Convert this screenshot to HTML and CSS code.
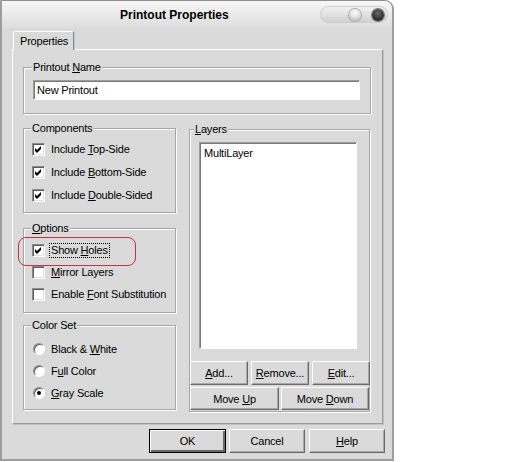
FILE: index.html
```html
<!DOCTYPE html>
<html>
<head>
<meta charset="utf-8">
<title>Printout Properties</title>
<link rel="stylesheet" href="styles.css">
</head>
<body>
<div class="window">
  <div class="titlebar">
    <div class="title">Printout Properties</div>
    <div class="controls"><span class="dot light"></span><span class="dot dark"></span></div>
  </div>
  <div class="tabs"><div class="tab">Properties</div></div>
  <div class="panel">
    <fieldset class="group name-group">
      <legend>Printout <u>N</u>ame</legend>
      <div class="textbox">New Printout</div>
    </fieldset>
    <div class="columns">
      <div class="left">
        <fieldset class="group comp">
          <legend>Components</legend>
          <div class="rows">
            <div class="row r23"><span class="check"><svg width="11" height="11" viewBox="0 0 11 11"><polygon points="2,4 4,6 8,2 8,5 4,9 2,7" fill="#000"/></svg></span><span class="lbl">Include <u>T</u>op-Side</span></div>
            <div class="row r23"><span class="check"><svg width="11" height="11" viewBox="0 0 11 11"><polygon points="2,4 4,6 8,2 8,5 4,9 2,7" fill="#000"/></svg></span><span class="lbl">Include <u>B</u>ottom-Side</span></div>
            <div class="row r23"><span class="check"><svg width="11" height="11" viewBox="0 0 11 11"><polygon points="2,4 4,6 8,2 8,5 4,9 2,7" fill="#000"/></svg></span><span class="lbl">Include <u>D</u>ouble-Sided</span></div>
          </div>
        </fieldset>
        <fieldset class="group options">
          <legend><u>O</u>ptions</legend>
          <div class="rows">
            <div class="row r22 annotated"><span class="annot"></span><span class="check"><svg width="11" height="11" viewBox="0 0 11 11"><polygon points="2,4 4,6 8,2 8,5 4,9 2,7" fill="#000"/></svg></span><span class="lbl focus">Show <u>H</u>oles</span></div>
            <div class="row r22"><span class="check"></span><span class="lbl"><u>M</u>irror Layers</span></div>
            <div class="row r22"><span class="check"></span><span class="lbl">Enable <u>F</u>ont Substitution</span></div>
          </div>
        </fieldset>
        <fieldset class="group colorset">
          <legend>Color Set</legend>
          <div class="rows">
            <div class="row r22"><span class="radio"></span><span class="lbl">Black &amp; <u>W</u>hite</span></div>
            <div class="row r22"><span class="radio"></span><span class="lbl">F<u>u</u>ll Color</span></div>
            <div class="row r22"><span class="radio"><span class="pip"></span></span><span class="lbl"><u>G</u>ray Scale</span></div>
          </div>
        </fieldset>
      </div>
      <fieldset class="group layers">
        <legend><u>L</u>ayers</legend>
        <div class="listbox">MultiLayer</div>
        <div class="btnrow one">
          <div class="btn w58"><span><u>A</u>dd...</span></div>
          <div class="btn w58"><span><u>R</u>emove...</span></div>
          <div class="btn w58"><span><u>E</u>dit...</span></div>
        </div>
        <div class="btnrow two">
          <div class="btn w89 h23"><span>Move <u>U</u>p</span></div>
          <div class="btn w88 h23"><span>Move <u>D</u>own</span></div>
        </div>
      </fieldset>
    </div>
  </div>
  <div class="footer">
    <div class="btn default ok"><span>OK</span></div>
    <div class="btn w76 cancel"><span>Cancel</span></div>
    <div class="btn w76"><span><u>H</u>elp</span></div>
  </div>
</div>
</body>
</html>
```
FILE: styles.css
```css
* { box-sizing: border-box; }
body {
  margin: 0;
  background: #ffffff;
  font-family: "Liberation Sans", Arial, sans-serif;
  font-size: 11px;
  letter-spacing: -0.2px;
  color: #000;
}
u { text-underline-offset: 1px; }

.window {
  width: 394px;
  height: 461px;
  background: #d9dad9;
  border: 1px solid #8f8f8f;
  border-left: 2px solid #9d9d9d;
  border-right: 2px solid #9d9d9d;
  border-bottom: 2px solid #9d9d9d;
  border-radius: 0 9px 0 0;
  display: flex;
  flex-direction: column;
}

.titlebar {
  height: 27px;
  flex: none;
  display: flex;
  align-items: center;
  border-radius: 0 8px 0 0;
  background: linear-gradient(#f7f7f7, #ebebeb 45%, #dcdddc);
}
.title {
  flex: 1;
  margin-left: 118px;
  font-size: 12px;
  font-weight: bold;
  letter-spacing: 0;
}
.controls {
  width: 68px;
  height: 17px;
  margin-right: 4px;
  border-radius: 9px;
  background: linear-gradient(#f4f4f4, #cecece);
  box-shadow: inset 0 0 0 1px #cfcfcf;
  display: flex;
  align-items: center;
  justify-content: flex-end;
  gap: 11px;
  padding-right: 4px;
}
.dot { width: 12px; height: 12px; border-radius: 50%; }
.dot.light {
  background: radial-gradient(circle at 50% 30%, #ffffff, #e2e2e2 45%, #b4b4b4 90%);
  box-shadow: 0 0 0 1px #a9a9a9;
}
.dot.dark {
  background: radial-gradient(circle at 50% 35%, #6a6a6a, #2d2d2d 65%, #151515);
  box-shadow: 0 0 0 1px #7a7a7a;
}

.tabs {
  flex: none;
  margin-top: 3px;
  padding-left: 11px;
  display: flex;
  position: relative;
  z-index: 1;
  margin-bottom: -1px;
}
.tab {
  width: 61px;
  height: 19px;
  padding: 3px 0 0 6px;
  background: #d9dad9;
  border-top: 1px solid #ffffff;
  border-left: 1px solid #ffffff;
  border-right: 1px solid #8a8a8a;
  box-shadow: 1px 0 0 #c4c4c4;
  border-radius: 2px 2px 0 0;
}

.panel {
  flex: none;
  width: 371px;
  height: 375px;
  margin-left: 10px;
  padding: 11px 11px 0 10px;
  border: 1px solid;
  border-color: #ffffff #9a9a9a #9a9a9a #ffffff;
  box-shadow: 1px 1px 0 #c2c2c2;
}

fieldset.group {
  display: block;
  margin: 0;
  padding: 0 8px;
  min-width: 0;
  border: 1px solid #a5a5a5;
  box-shadow: inset 1px 1px 0 #ffffff, 1px 1px 0 #ffffff;
}
fieldset.group legend {
  padding: 0 1px;
  margin-left: -1px;
  line-height: 13px;
  background: #d9dad9;
}

fieldset.name-group { height: 53px; padding-left: 9px; }
.textbox {
  margin-top: 6px;
  width: 327px;
  height: 20px;
  padding: 3px 0 0 3px;
  background: #ffffff;
  border: 1px solid;
  border-color: #9c9c9c #ffffff #ffffff #9c9c9c;
  box-shadow: inset 1px 1px 0 #7a7a7a;
}

.columns {
  margin-top: 8px;
  display: grid;
  grid-template-columns: 153px 181px;
  column-gap: 13px;
  align-items: start;
}
.left { display: block; }
fieldset.comp { height: 91px; }
fieldset.options { height: 91px; margin-top: 9px; }
fieldset.colorset { height: 91px; margin-top: 6px; }
.comp .rows { padding-top: 3px; }
.options .rows { padding-top: 4px; }
.colorset .rows { padding-top: 6px; }

.row { display: flex; align-items: center; }
.r23 { height: 23px; }
.r22 { height: 22px; }
.lbl { margin-left: 6px; line-height: 13px; white-space: nowrap; }
.lbl.focus { margin-left: 4px; border: 1px dotted #000; padding: 0 1px; }
.annotated { position: relative; }
.annot {
  position: absolute;
  left: -14px;
  top: -2px;
  width: 118px;
  height: 29px;
  border: 1px solid #c8303c;
  border-radius: 8px;
}

.check {
  width: 13px;
  height: 13px;
  flex: none;
  background: #ffffff;
  border: 1px solid;
  border-color: #8c8c8c #ffffff #ffffff #8c8c8c;
  box-shadow: inset 1px 1px 0 #5a5a5a, inset -1px -1px 0 #e0e0e0;
  display: flex;
}
.check svg { display: block; }

.radio {
  width: 12px;
  height: 12px;
  flex: none;
  margin-left: 1px;
  border-radius: 50%;
  background: #ffffff;
  border: 1px solid;
  border-color: #8c8c8c #ffffff #ffffff #8c8c8c;
  box-shadow: inset 1px 1px 0 #5a5a5a;
  display: grid;
  place-items: center;
}
.pip { width: 4px; height: 4px; border-radius: 50%; background: #000; }

fieldset.layers {
  height: 289px;
  margin-top: 1px;
  padding: 0;
}
fieldset.layers legend { margin-left: 4px; }
.listbox {
  margin: 6px 0 0 9px;
  width: 158px;
  height: 207px;
  padding: 4px 0 0 4px;
  background: #ffffff;
  border: 1px solid;
  border-color: #9c9c9c #ffffff #ffffff #9c9c9c;
  box-shadow: inset 1px 1px 0 #7a7a7a;
}
.btnrow { display: flex; }
.btnrow.one { margin-top: 12px; gap: 3px; }
.btnrow.two { margin-top: 2px; gap: 2px; }

.btn {
  height: 24px;
  flex: none;
  background: #d9dad9;
  border: 1px solid;
  border-color: #ffffff #6a6a6a #6a6a6a #ffffff;
  box-shadow: inset -1px -1px 0 #a8a8a8;
  display: flex;
  align-items: center;
  justify-content: center;
  white-space: nowrap;
}
.w58 { width: 58px; }
.w89 { width: 89px; }
.w88 { width: 88px; }
.w76 { width: 76px; }
.h23 { height: 23px; }

.footer {
  flex: none;
  margin-top: 5px;
  padding-right: 7px;
  display: flex;
  justify-content: flex-end;
}
.btn.default {
  width: 77px;
  border: 1px solid #000;
  box-shadow: inset 1px 1px 0 #ffffff, inset -2px -2px 0 #6a6a6a;
}
.ok { margin-right: 3px; }
.cancel { margin-right: 4px; }
```
